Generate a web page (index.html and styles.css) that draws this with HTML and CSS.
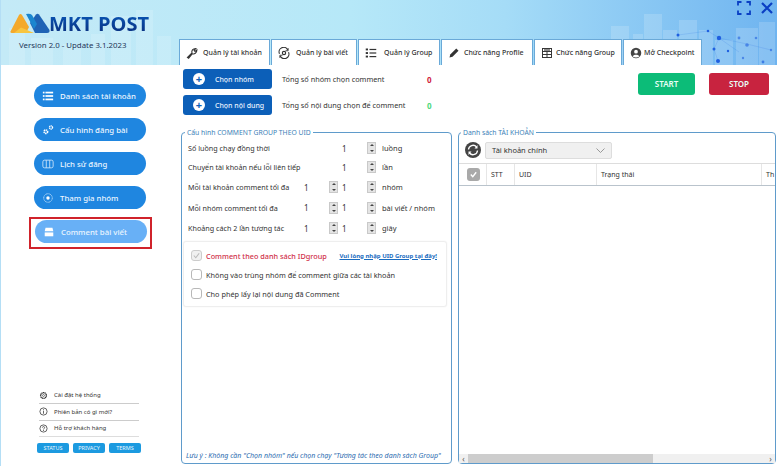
FILE: index.html
```html
<!DOCTYPE html>
<html lang="vi">
<head>
  <meta charset="UTF-8">
  <title>MKT Post</title>
  <link rel="stylesheet" href="styles.css">
</head>
<body>
  <div class="app">
    <header class="topbar">
      <!-- nen thanh pho + cac cham mang -->
      <svg class="skyline" width="777" height="65" viewBox="0 0 777 65">
        <g fill="#fff" opacity=".14">
          <rect x="8" y="28" width="16" height="37"/><rect x="30" y="38" width="22" height="27"/>
          <rect x="62" y="44" width="18" height="21"/><rect x="90" y="34" width="14" height="31"/>
          <rect x="110" y="16" width="20" height="49"/><rect x="135" y="10" width="17" height="55"/>
          <rect x="156" y="36" width="14" height="29"/>
        </g>
        <g fill="#fff" opacity=".16">
          <rect x="610" y="26" width="18" height="39"/><rect x="632" y="34" width="10" height="31"/>
          <rect x="643" y="14" width="18" height="51"/><rect x="662" y="30" width="14" height="35"/>
          <rect x="678" y="20" width="18" height="45"/><rect x="698" y="30" width="14" height="35"/>
          <rect x="714" y="40" width="18" height="25"/><rect x="735" y="28" width="22" height="37"/>
          <rect x="758" y="22" width="16" height="43"/>
        </g>
        <g fill="none" stroke="#2f6fe0" stroke-width=".4" opacity=".45">
          <path d="M677 35 707 31 718 38 738 52M718 38 713 49 717 61M718 38 746 44 770 50"/>
        </g>
        <g fill="#1f5fe0">
          <circle cx="677" cy="35" r="1.500"/><circle cx="707" cy="31" r="1.300"/><circle cx="718" cy="38" r="2.200"/>
          <circle cx="713" cy="49" r="1.500"/><circle cx="727" cy="51" r="1.200"/><circle cx="717" cy="61" r="2"/>
          <circle cx="738" cy="38" r="1.400" opacity=".6"/><circle cx="746" cy="45" r="1.800" opacity=".6"/><circle cx="755" cy="38" r="1.300" opacity=".6"/>
          <circle cx="742" cy="58" r="1.200" opacity=".6"/><circle cx="762" cy="62" r="1.400" opacity=".7"/><circle cx="770" cy="50" r="1.200" opacity=".6"/>
        </g>
      </svg>

      <div class="brand">
        <div class="logo">
          <svg width="40" height="21" viewBox="0 0 40 21">
            <path d="M.5 18.500 9 2Q10.500 0 12 2L19 14 16 20H2Q0 20 .5 18.500Z" fill="#f4a92b"/>
            <path d="M4 20 11 14.500 24 20Z" fill="#f8c53f"/>
            <path d="M20 10 26 1.500Q27.500 0 29 1.500L39.500 17Q40 20 37 20H25Z" fill="#1f63b5"/>
            <path d="M16 1Q20 0 22 2L27 11 24 16Z" fill="#1a86cf"/>
          </svg>
          <span class="logo-text">MKT POST</span>
        </div>
        <div class="version">Version 2.0 - Update 3.1.2023</div>
      </div>

      <nav class="tabs">
        <div class="tab tab-1">
          <svg class="tab-icon" viewBox="0 0 16 16" fill="none" stroke="#333" stroke-width="1.500"><path d="M2 14 8 8C7 5 9 2 13 2L10.800 4.500 12 6 14.500 4C14.500 8 11 10 8.500 9L3.500 15Z"/></svg>
          Quản lý tài khoản
        </div>
        <div class="tab tab-2">
          <svg class="tab-icon" viewBox="0 0 16 16" fill="none" stroke="#333" stroke-width="1.500"><path d="M2 9A6 6 0 0 1 13 4M14 7A6 6 0 0 1 3 12"/><circle cx="8" cy="8" r="2.200"/><path d="M13.500 1.500V5H10M2.500 14.500V11H6" stroke-width="1.200"/></svg>
          Quản lý bài viết
        </div>
        <div class="tab tab-3">
          <svg class="tab-icon" viewBox="0 0 16 16" fill="#333"><rect x="1" y="2" width="3" height="2.500"/><rect x="1" y="6.800" width="3" height="2.500"/><rect x="1" y="11.500" width="3" height="2.500"/><rect x="6" y="2.500" width="9" height="1.600"/><rect x="6" y="7.200" width="9" height="1.600"/><rect x="6" y="12" width="9" height="1.600"/></svg>
          Quản lý Group
        </div>
        <div class="tab tab-4">
          <svg class="tab-icon" viewBox="0 0 16 16" fill="#333"><path d="M2 14 3 10 11 2 14 5 6 13Z"/></svg>
          Chức năng Profile
        </div>
        <div class="tab tab-5">
          <svg class="tab-icon" viewBox="0 0 16 16" fill="none" stroke="#333" stroke-width="1.300"><rect x="2" y="2" width="12" height="12"/><path d="M2 6H14M2 10H14M8 6V14"/><path d="M4 4H12" stroke-width="1.500"/></svg>
          Chức năng Group
        </div>
        <div class="tab tab-6">
          <svg class="tab-icon" viewBox="0 0 16 16"><circle cx="8" cy="8" r="7" fill="#444"/><circle cx="8" cy="6.300" r="2.500" fill="#fff"/><path d="M3.500 12.500C4.500 9.500 11.500 9.500 12.500 12.500 10 14.500 6 14.500 3.500 12.500Z" fill="#fff"/></svg>
          Mở Checkpoint
        </div>
      </nav>

      <div class="win-btns">
        <svg width="14" height="14" viewBox="0 0 14 14" fill="none" stroke="#0b3fc4" stroke-width="1.800"><path d="M1 4.500V1H4.500M9.500 1H13V4.500M13 9.500V13H9.500M4.500 13H1V9.500"/></svg>
        <svg width="14" height="14" viewBox="0 0 14 14" fill="none" stroke="#0b3fc4" stroke-width="2.200"><path d="M2 2 12 12M12 2 2 12"/></svg>
      </div>
    </header>

    <div class="workspace">
      <aside class="sidebar">
        <div class="menu">
          <div class="menu-item">
            <svg class="menu-icon" viewBox="0 0 14 14" fill="#fff"><rect x="1" y="2" width="2" height="2"/><rect x="1" y="6" width="2" height="2"/><rect x="1" y="10" width="2" height="2"/><rect x="4" y="2" width="9" height="2"/><rect x="4" y="6" width="9" height="2"/><rect x="4" y="10" width="9" height="2"/></svg>
            Danh sách tài khoản
          </div>
          <div class="menu-item">
            <svg class="menu-icon" viewBox="0 0 14 14" fill="none" stroke="#fff"><circle cx="4.500" cy="9" r="2" stroke-width="2" stroke-dasharray="1.500 .6"/><circle cx="10.500" cy="4" r="1.800" stroke-width="1.600" stroke-dasharray="1.300 .5"/></svg>
            Cấu hình đăng bài
          </div>
          <div class="menu-item">
            <svg class="menu-icon" viewBox="0 0 14 14" fill="none" stroke="#cfe6fb" stroke-width="1"><rect x="1" y="2.500" width="12" height="9" rx="2"/><path d="M5 2.500V11.500M9 2.500V11.500"/></svg>
            Lịch sử đăng
          </div>
          <div class="menu-item">
            <svg class="menu-icon" viewBox="0 0 14 14" fill="none" stroke="#cfe6fb"><circle cx="7" cy="7" r="5" stroke-dasharray="1.200 .5"/><circle cx="7" cy="7" r="2" fill="#fff" stroke="none"/></svg>
            Tham gia nhóm
          </div>
          <div class="menu-active">
            <div class="menu-item selected">
              <svg class="menu-icon" viewBox="0 0 14 14" fill="#fff"><path d="M3 2H11L12 6H2Z"/><rect x="2" y="7.500" width="10" height="4.500"/></svg>
              Comment bài viết
            </div>
          </div>
        </div>

        <div class="support">
          <div class="support-row">
            <svg class="support-icon" viewBox="0 0 12 12" fill="none" stroke="#333"><circle cx="6" cy="6" r="3.800" stroke-width="1.800" stroke-dasharray="1.600 .5"/><circle cx="6" cy="6" r="1.300" stroke-width=".8"/></svg>
            Cài đặt hệ thống
          </div>
          <div class="support-row">
            <svg class="support-icon" viewBox="0 0 12 12" fill="none" stroke="#333"><circle cx="6" cy="6" r="4.800"/><path d="M6 5V9M6 3V4.200"/></svg>
            Phiên bản có gì mới?
          </div>
          <div class="support-row">
            <svg class="support-icon" viewBox="0 0 12 12" fill="none" stroke="#333"><circle cx="6" cy="6" r="4.800"/><path d="M4.500 4.800C4.500 3 7.500 3 7.500 4.800 7.500 6 6 6 6 7.300M6 8V9.200"/></svg>
            Hỗ trợ khách hàng
          </div>
          <div class="policy">
            <span class="policy-btn">STATUS</span>
            <span class="policy-btn">PRIVACY</span>
            <span class="policy-btn">TERMS</span>
          </div>
        </div>
      </aside>

      <main class="main">
        <section class="actions">
          <div class="pick-list">
            <div class="pick-row">
              <div class="pick-btn"><span class="plus">+</span>Chọn nhóm</div>
              <span class="pick-label">Tổng số nhóm chọn comment</span>
              <span class="count count-red">0</span>
            </div>
            <div class="pick-row">
              <div class="pick-btn"><span class="plus">+</span>Chọn nội dung</div>
              <span class="pick-label">Tổng số nội dung chọn để comment</span>
              <span class="count count-green">0</span>
            </div>
          </div>
          <div class="run-btns">
            <div class="run-btn start">START</div>
            <div class="run-btn stop">STOP</div>
          </div>
        </section>

        <section class="panels">
          <fieldset class="panel panel-config">
            <legend>Cấu hình COMMENT GROUP THEO UID</legend>
            <div class="config-grid">
              <span class="cfg-label">Số luồng chạy đồng thời</span>
              <span></span><span></span>
              <span class="cfg-val">1</span><span class="spin"></span><span class="cfg-unit">luồng</span>

              <span class="cfg-label">Chuyển tài khoản nếu lỗi liên tiếp</span>
              <span></span><span></span>
              <span class="cfg-val">1</span><span class="spin"></span><span class="cfg-unit">lần</span>

              <span class="cfg-label">Mỗi tài khoản comment tối đa</span>
              <span class="cfg-val">1</span><span class="spin"></span>
              <span class="cfg-val">1</span><span class="spin"></span><span class="cfg-unit">nhóm</span>

              <span class="cfg-label">Mỗi nhóm comment tối đa</span>
              <span class="cfg-val">1</span><span class="spin"></span>
              <span class="cfg-val">1</span><span class="spin"></span><span class="cfg-unit">bài viết / nhóm</span>

              <span class="cfg-label">Khoảng cách 2 lần tương tác</span>
              <span class="cfg-val">1</span><span class="spin"></span>
              <span class="cfg-val">1</span><span class="spin"></span><span class="cfg-unit">giây</span>
            </div>

            <div class="options">
              <div class="option">
                <span class="check checked">
                  <svg viewBox="0 0 10 10" width="9" height="9" fill="none" stroke="#bbb" stroke-width="1.200"><path d="M2 5 4.200 7.500 8 2.500"/></svg>
                </span>
                <span class="option-red">Comment theo danh sách IDgroup</span>
                <a class="uid-link" href="#">Vui lòng nhập UID Group tại đây!</a>
              </div>
              <div class="option"><span class="check"></span>Không vào trùng nhóm để comment giữa các tài khoản</div>
              <div class="option"><span class="check"></span>Cho phép lấy lại nội dung đã Comment</div>
            </div>

            <p class="note">Lưu ý : Không cần "Chọn nhóm" nếu chọn chạy "Tương tác theo danh sách Group"</p>
          </fieldset>

          <fieldset class="panel panel-accounts">
            <legend>Danh sách TÀI KHOẢN</legend>
            <div class="account-bar">
              <span class="refresh">
                <svg viewBox="0 0 16 16" width="16" height="16"><circle cx="8" cy="8" r="8" fill="#444"/><path d="M3.500 7.500A4.500 4.500 0 0 1 11.500 5M12.500 8.500A4.500 4.500 0 0 1 4.500 11" fill="none" stroke="#fff" stroke-width="1.300"/><path d="M12.500 3V6.500H9.500ZM3.500 13V9.500H6.500Z" fill="#fff"/></svg>
              </span>
              <div class="select">
                Tài khoản chính
                <svg width="9" height="5" viewBox="0 0 9 5" fill="none" stroke="#999"><path d="M.5 .5 4.500 4.500 8.500 .5"/></svg>
              </div>
            </div>
            <div class="table-head">
              <div class="th th-check">
                <span class="head-check">
                  <svg viewBox="0 0 10 10" width="9" height="9" fill="none" stroke="#fff" stroke-width="1.500"><path d="M2 5 4.200 7.500 8 2.500"/></svg>
                </span>
              </div>
              <div class="th th-stt">STT</div>
              <div class="th th-uid">UID</div>
              <div class="th th-status">Trạng thái</div>
              <div class="th th-more">Th</div>
            </div>
            <div class="table-body"></div>
            <div class="hscroll">
              <span class="arrow">‹</span>
              <div class="track"><div class="thumb"></div></div>
              <span class="arrow">›</span>
            </div>
          </fieldset>
        </section>
      </main>
    </div>
  </div>
</body>
</html>
```

FILE: styles.css
```css
* {
  box-sizing: border-box;
}

html, body {
  margin: 0;
  height: 100%;
  overflow: hidden;
}

body {
  font-family: "Noto Sans", "Open Sans", Arial, sans-serif;
  font-size: 7.5px;
  color: #333;
  background: #fff;
}

.app {
  width: 777px;
  height: 466px;
  display: flex;
  flex-direction: column;
  border-left: 1px solid #b4def5;
}

/* thanh tren */
.topbar {
  position: relative;
  height: 65px;
  flex: none;
  display: flex;
  align-items: flex-end;
  background: linear-gradient(90deg, #c4eaf7 0%, #b6e8f8 45%, #a5dcf7 65%, #6fb4f0 100%);
}

.skyline {
  position: absolute;
  left: 0;
  top: 0;
}

.brand {
  position: relative;
  align-self: flex-start;
  width: 178px;
  padding: 13px 0 0 9px;
}

.logo {
  display: flex;
  align-items: center;
  height: 21px;
}

.logo-text {
  font-family: "Open Sans", Arial, sans-serif;
  font-size: 20px;
  font-weight: 700;
  line-height: 21px;
  margin-left: -1px;
  background: linear-gradient(180deg, #0a58b8, #0a2f7e);
  -webkit-background-clip: text;
  background-clip: text;
  color: transparent;
}

.version {
  margin: 5px 0 0 9px;
  font-size: 7.850px;
  line-height: 12px;
  color: #1d3557;
}

.tabs {
  position: relative;
  display: flex;
  gap: 1px;
}

.tab {
  height: 26px;
  display: flex;
  align-items: center;
  padding-left: 6px;
  background: #fff;
  border: 1px solid #6aa9d8;
  border-bottom: none;
  font-size: 7px;
  font-weight: 500;
  white-space: nowrap;
}

.tab-icon {
  width: 12px;
  height: 12px;
  flex: none;
}

.tab-1 { width: 91px; gap: 5px; }
.tab-2 { width: 86px; gap: 6px; }
.tab-3 { width: 82px; gap: 7px; }
.tab-4 { width: 92px; gap: 4px; }
.tab-5 { width: 88px; gap: 3px; }
.tab-6 { width: 79px; gap: 2px; }

.win-btns {
  position: absolute;
  right: 3px;
  top: 1px;
  display: flex;
  gap: 9px;
}

.workspace {
  flex: 1;
  min-height: 0;
  display: flex;
}

/* menu trai */
.sidebar {
  width: 177px;
  flex: none;
  display: flex;
  flex-direction: column;
  justify-content: space-between;
  padding: 19px 0 13px;
}

.menu {
  display: flex;
  flex-direction: column;
  align-items: flex-start;
  gap: 11px;
  padding-left: 33px;
}

.menu-item {
  width: 112px;
  height: 23px;
  display: flex;
  align-items: center;
  gap: 6px;
  padding-left: 8px;
  border-radius: 12px;
  background: #1f86e0;
  color: #eaf5ff;
  font-size: 7.800px;
  font-weight: 500;
  white-space: nowrap;
}

.menu-icon {
  width: 12px;
  height: 12px;
  flex: none;
}

.menu-active {
  margin: -3px 0 0 -5px;
  padding: 1px 3px 4px 4px;
  border: 2px solid #d0232b;
}

.selected {
  background: #68b0f6;
}

.support {
  width: 100px;
  margin-left: 38px;
}

.support-row {
  height: 16.500px;
  display: flex;
  align-items: center;
  gap: 6px;
  padding-left: 0;
  border-bottom: 1px solid #ccc;
  font-size: 6px;
  white-space: nowrap;
}

.support-row:nth-child(3) {
  border-bottom-color: #ddd;
}

.support-icon {
  width: 9px;
  height: 9px;
  flex: none;
}

.policy {
  display: flex;
  justify-content: space-between;
  width: 104px;
  margin: 6px 0 0 -2px;
}

.policy-btn {
  width: 32px;
  height: 10px;
  line-height: 10px;
  text-align: center;
  border-radius: 2px;
  background: #1c9ae0;
  color: #eaf7ff;
  font-size: 5.500px;
}

.main {
  flex: 1;
  min-width: 0;
  display: flex;
  flex-direction: column;
  padding: 4px 0 2px 3px;
}

.actions {
  height: 59px;
  flex: none;
  display: flex;
  justify-content: space-between;
}

.pick-list {
  display: flex;
  flex-direction: column;
  gap: 6px;
  padding-left: 2px;
}

.pick-row {
  display: flex;
  align-items: center;
}

.pick-btn {
  width: 89px;
  height: 20px;
  display: flex;
  align-items: center;
  padding-left: 10px;
  gap: 10px;
  border-radius: 3px;
  background: #0c5fb8;
  color: #e8f3ff;
  font-size: 7px;
  font-weight: 500;
  white-space: nowrap;
}

.plus {
  width: 12px;
  height: 12px;
  flex: none;
  border-radius: 50%;
  background: #fff;
  color: #0c5fb8;
  font-size: 11px;
  font-weight: 700;
  line-height: 11px;
  text-align: center;
}

.pick-label {
  width: 145px;
  margin-left: 10px;
  font-size: 7.300px;
  white-space: nowrap;
}

.count {
  font-size: 8px;
  font-weight: 700;
}

.count-red { color: #d0243c; }
.count-green { color: #4fd97c; }

.run-btns {
  display: flex;
  gap: 14px;
  padding: 4px 8px 0 0;
}

.run-btn {
  height: 22px;
  line-height: 22px;
  text-align: center;
  border-radius: 3px;
  color: #e9fff6;
  font-size: 8px;
  font-weight: 600;
}

.start { width: 57px; background: #0cbc78; }
.stop { width: 60px; background: #c8233f; }

.panels {
  flex: 1;
  min-height: 0;
  display: flex;
  gap: 6px;
}

.panel {
  margin: 0;
  min-width: 0;
  border: 1px solid #5f9bcb;
  border-radius: 4px;
  display: flex;
  flex-direction: column;
}

.panel legend {
  margin-left: 2px;
  padding: 0 2px;
  font-size: 6.800px;
  line-height: 9px;
  color: #3d7fb8;
}

.panel-config {
  width: 271px;
  flex: none;
  padding: 2px 4px 3px 1px;
}

.panel-accounts {
  flex: 1;
  padding: 0;
  margin-right: 1px;
}

.config-grid {
  display: grid;
  grid-template-columns: 114px 27px 11px 27px 12px 1fr;
  grid-template-rows: 18px 20px 20px 21px 20px;
  align-items: center;
  padding-left: 5px;
  white-space: nowrap;
}

.cfg-label {
  font-size: 7.200px;
}

.cfg-val {
  padding-left: 2px;
  font-size: 8px;
}

.cfg-unit {
  padding-left: 3px;
  font-size: 7.500px;
}

/* nut tang giam so */
.spin {
  position: relative;
  width: 9px;
  height: 12px;
  background: #e4e4e4;
  border: 1px solid #c9c9c9;
}

.spin::before,
.spin::after {
  content: "";
  position: absolute;
  left: 1.500px;
  border-left: 2px solid transparent;
  border-right: 2px solid transparent;
}

.spin::before {
  top: 1px;
  border-bottom: 2px solid #444;
}

.spin::after {
  bottom: 1px;
  border-top: 2px solid #444;
}

.options {
  height: 66px;
  margin: 3px 0 0 0;
  padding: 4px 9px 0 7px;
  border: 1px solid #eee;
  border-radius: 3px;
  box-shadow: 0 0 1px #ddd;
}

.option {
  height: 19px;
  display: flex;
  align-items: center;
  gap: 4px;
  font-size: 7.300px;
  white-space: nowrap;
}

.check {
  width: 11px;
  height: 11px;
  flex: none;
  display: flex;
  align-items: center;
  justify-content: center;
  border: 1px solid #b8b8b8;
  border-radius: 3px;
  background: #fff;
}

.checked {
  background: #f0f0f0;
  border-color: #ccc;
}

.option-red {
  color: #d0304a;
  font-weight: 500;
}

.uid-link {
  margin-left: auto;
  color: #1a6cc0;
  font-size: 6px;
  font-weight: 700;
}

.note {
  margin: auto 0 0 3px;
  color: #2c6cb0;
  font-size: 7px;
  font-style: italic;
  white-space: nowrap;
}

.account-bar {
  height: 26px;
  flex: none;
  display: flex;
  align-items: center;
  padding: 0 0 0 6px;
  gap: 4px;
}

.refresh {
  height: 16px;
}

.select {
  width: 127px;
  height: 17px;
  display: flex;
  align-items: center;
  justify-content: space-between;
  padding: 0 6px;
  background: #f0f0f0;
  border: 1px solid #ddd;
  border-radius: 2px;
  font-size: 7.500px;
}

.table-head {
  height: 23px;
  flex: none;
  display: flex;
  border-top: 1px solid #ddd;
  border-bottom: 1px solid #b9c3cc;
}

.th {
  display: flex;
  align-items: center;
  padding-left: 4px;
  border-right: 1px solid #e6e6e6;
  font-size: 7px;
  white-space: nowrap;
}

.th-check { width: 28px; padding-left: 8px; }
.th-stt { width: 28px; }
.th-uid { width: 82px; }
.th-status { width: 165px; }
.th-more { flex: 1; border-right: none; overflow: hidden; }

.head-check {
  width: 13px;
  height: 13px;
  display: flex;
  align-items: center;
  justify-content: center;
  border-radius: 3px;
  background: #a9a9a9;
}

.table-body {
  flex: 1;
  min-height: 0;
}

.hscroll {
  height: 9px;
  flex: none;
  display: flex;
  align-items: center;
  background: #f0f0f0;
}

.arrow {
  width: 9px;
  flex: none;
  text-align: center;
  line-height: 9px;
  font-size: 8px;
  color: #555;
}

.track {
  flex: 1;
  height: 9px;
}

.thumb {
  width: 62%;
  height: 100%;
  background: #cdcdcd;
}
```
